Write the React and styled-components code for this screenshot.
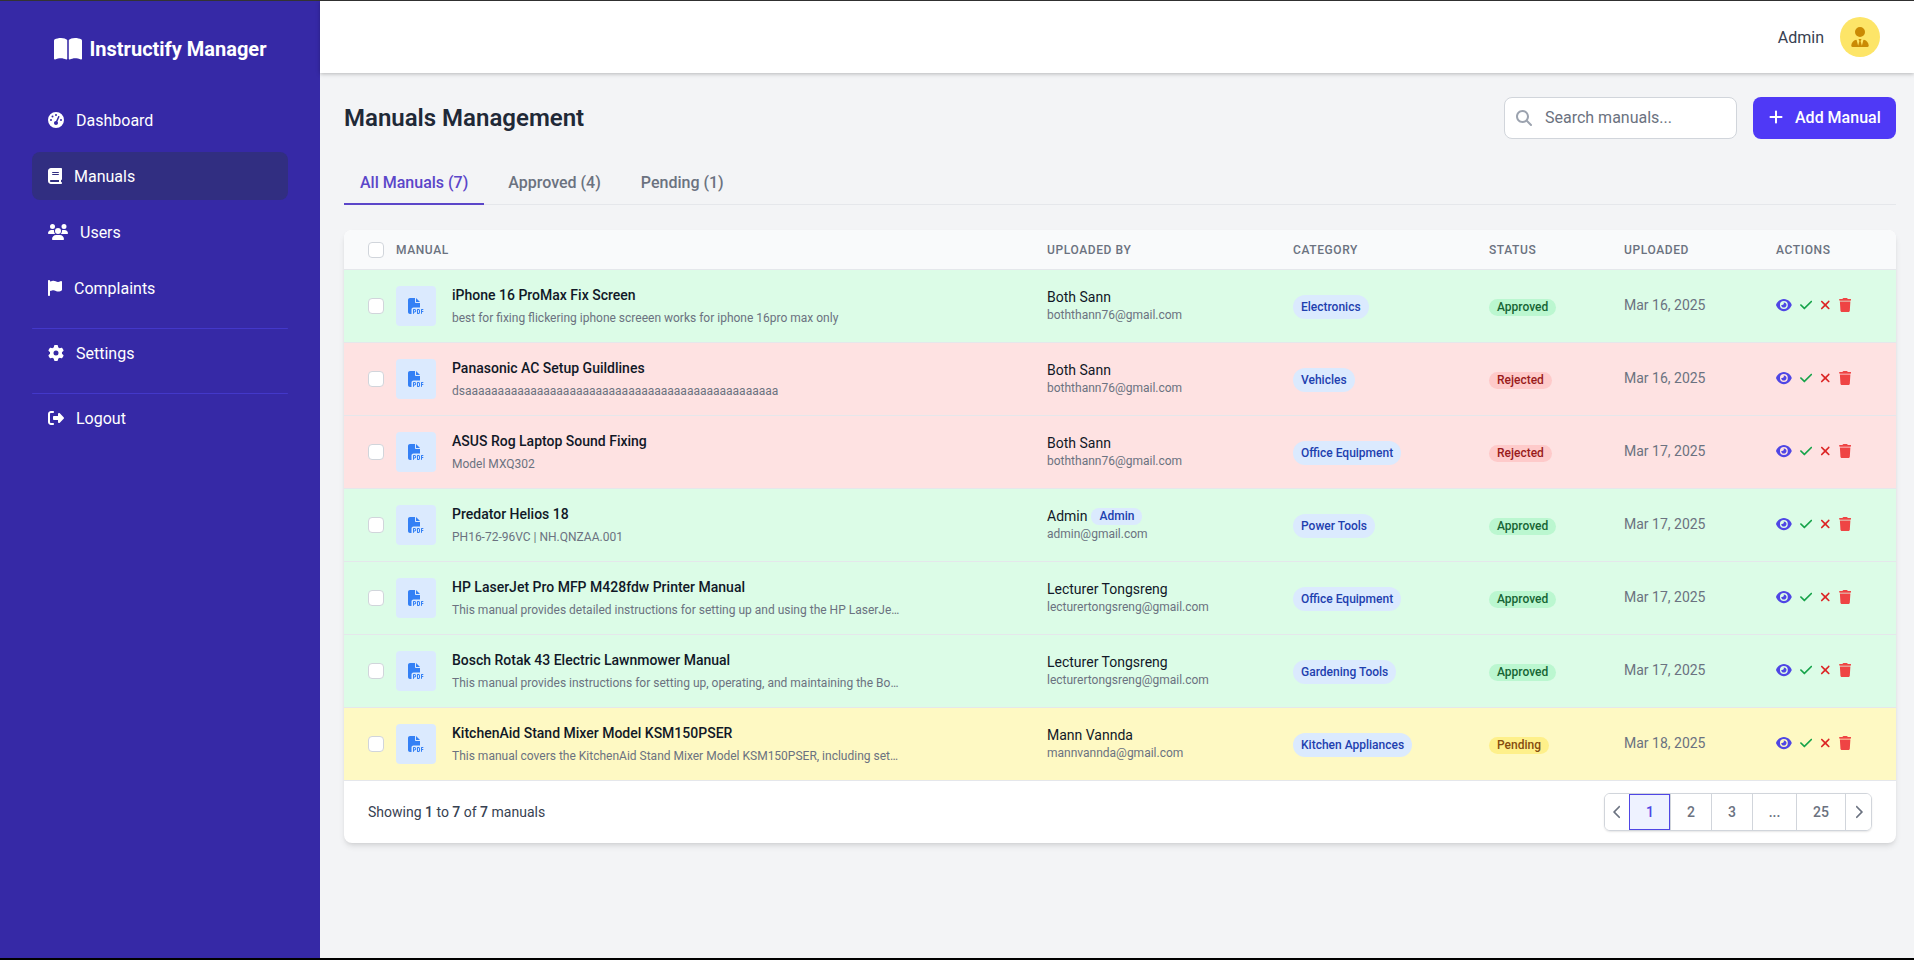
import React from "react";
import styled, { createGlobalStyle } from "styled-components";
import {
  FaBookOpen,
  FaGaugeHigh,
  FaBook,
  FaUsers,
  FaFlag,
  FaGear,
  FaRightFromBracket,
  FaUserTie,
  FaMagnifyingGlass,
  FaPlus,
  FaFilePdf,
  FaEye,
  FaCheck,
  FaXmark,
  FaTrash,
  FaChevronLeft,
  FaChevronRight,
} from "react-icons/fa6";

const manuals = [
  {
    title: "iPhone 16 ProMax Fix Screen",
    desc: "best for fixing flickering iphone screeen works for iphone 16pro max only",
    name: "Both Sann",
    email: "boththann76@gmail.com",
    category: "Electronics",
    status: "Approved",
    date: "Mar 16, 2025",
  },
  {
    title: "Panasonic AC Setup Guildlines",
    desc: "dsaaaaaaaaaaaaaaaaaaaaaaaaaaaaaaaaaaaaaaaaaaaaaaaa",
    name: "Both Sann",
    email: "boththann76@gmail.com",
    category: "Vehicles",
    status: "Rejected",
    date: "Mar 16, 2025",
  },
  {
    title: "ASUS Rog Laptop Sound Fixing",
    desc: "Model MXQ302",
    name: "Both Sann",
    email: "boththann76@gmail.com",
    category: "Office Equipment",
    status: "Rejected",
    date: "Mar 17, 2025",
  },
  {
    title: "Predator Helios 18",
    desc: "PH16-72-96VC | NH.QNZAA.001",
    name: "Admin",
    admin: true,
    email: "admin@gmail.com",
    category: "Power Tools",
    status: "Approved",
    date: "Mar 17, 2025",
  },
  {
    title: "HP LaserJet Pro MFP M428fdw Printer Manual",
    desc: "This manual provides detailed instructions for setting up and using the HP LaserJe…",
    name: "Lecturer Tongsreng",
    email: "lecturertongsreng@gmail.com",
    category: "Office Equipment",
    status: "Approved",
    date: "Mar 17, 2025",
  },
  {
    title: "Bosch Rotak 43 Electric Lawnmower Manual",
    desc: "This manual provides instructions for setting up, operating, and maintaining the Bo…",
    name: "Lecturer Tongsreng",
    email: "lecturertongsreng@gmail.com",
    category: "Gardening Tools",
    status: "Approved",
    date: "Mar 17, 2025",
  },
  {
    title: "KitchenAid Stand Mixer Model KSM150PSER",
    desc: "This manual covers the KitchenAid Stand Mixer Model KSM150PSER, including set…",
    name: "Mann Vannda",
    email: "mannvannda@gmail.com",
    category: "Kitchen Appliances",
    status: "Pending",
    date: "Mar 18, 2025",
  },
];

const rowColors = { Approved: "#dcfce7", Rejected: "#fee2e2", Pending: "#fef9c3" };
const statusColors = {
  Approved: { bg: "#bbf7d0", fg: "#166534" },
  Rejected: { bg: "#fecaca", fg: "#991b1b" },
  Pending: { bg: "#fef08a", fg: "#854d0e" },
};
const columns = "minmax(0, 1fr) 246px 196px 135px 152px 120px";

const GlobalStyle = createGlobalStyle`
  * { box-sizing: border-box; }
  html, body { margin: 0; height: 100%; }
  body {
    font-family: Roboto, "Liberation Sans", sans-serif;
    background: #000;
    overflow: hidden;
  }
`;

const TopLine = styled.div`
  height: 1px;
  background: #333;
`;

const Shell = styled.div`
  display: flex;
  height: 957px;
  background: #f3f4f6;
`;

const Sidebar = styled.aside`
  width: 320px;
  flex: none;
  background: #3629a6;
  padding: 0 32px;
  color: #fff;
`;

const Brand = styled.div`
  height: 95px;
  display: flex;
  align-items: center;
  justify-content: center;
  gap: 8px;
  font-size: 20px;
  font-weight: 700;
`;

const NavList = styled.nav`
  display: flex;
  flex-direction: column;
`;

const NavItem = styled.div`
  height: 48px;
  margin-bottom: 8px;
  border-radius: 8px;
  display: flex;
  align-items: center;
  gap: 12px;
  padding: 0 16px;
  font-size: 16px;
  color: #fff;
  background: ${(p) => (p.$active ? "#312e81" : "transparent")};
  svg {
    flex: none;
    height: 16px;
    width: ${(p) => p.$iconW || 16}px;
  }
`;

const NavDivider = styled.div`
  height: 1px;
  background: #4338ca;
  margin-top: 8px;
  border-radius: 8px;
`;

const Main = styled.main`
  flex: 1;
  min-width: 0;
  display: flex;
  flex-direction: column;
`;

const Header = styled.header`
  height: 72px;
  flex: none;
  background: #fff;
  box-shadow: 0 1px 4px rgba(0, 0, 0, 0.25);
  display: flex;
  align-items: center;
  justify-content: flex-end;
  padding: 0 34px 0 0;
  gap: 16px;
`;

const AdminName = styled.span`
  font-size: 16px;
  color: #374151;
`;

const Avatar = styled.div`
  width: 40px;
  height: 40px;
  border-radius: 50%;
  background: #fde568;
  color: #ca8a04;
  display: flex;
  align-items: center;
  justify-content: center;
  svg {
    height: 20px;
    width: 18px;
  }
`;

const Content = styled.div`
  padding: 24px 18px 0 24px;
`;

const TitleRow = styled.div`
  display: flex;
  align-items: center;
  justify-content: space-between;
  height: 42px;
  margin-bottom: 24px;
`;

const Title = styled.h1`
  margin: 0;
  font-size: 24px;
  font-weight: 600;
  color: #1f2937;
`;

const Tools = styled.div`
  display: flex;
  gap: 16px;
`;

const SearchBox = styled.div`
  width: 233px;
  height: 42px;
  background: #fff;
  border: 1px solid #d1d5db;
  border-radius: 8px;
  display: flex;
  align-items: center;
  padding: 0 11px 1px;
  gap: 13px;
  color: #9ca3af;
  font-size: 16px;
  span {
    color: #6b7280;
  }
`;

const AddButton = styled.div`
  width: 143px;
  height: 42px;
  border-radius: 8px;
  background: #4f39f6;
  color: #fff;
  display: flex;
  align-items: center;
  padding: 0 0 2px 16px;
  gap: 12px;
  font-size: 16px;
  font-weight: 500;
  white-space: nowrap;
  svg {
    flex: none;
    height: 16px;
    width: 14px;
  }
`;

const Tabs = styled.div`
  display: flex;
  gap: 8px;
  height: 42px;
  border-bottom: 1px solid #e5e7eb;
  margin-bottom: 25px;
`;

const Tab = styled.div`
  height: 42px;
  padding: 0 16px 2px;
  font-size: 16px;
  font-weight: 500;
  color: ${(p) => (p.$active ? "#5b46c9" : "#6b7280")};
  border-bottom: 2px solid ${(p) => (p.$active ? "#5b46c9" : "transparent")};
  display: flex;
  align-items: center;
`;

const Card = styled.section`
  background: #fff;
  border-radius: 8px;
  box-shadow: 0 4px 6px -1px rgba(0, 0, 0, 0.1), 0 2px 4px -2px rgba(0, 0, 0, 0.1);
  overflow: hidden;
`;

const Row = styled.div`
  display: grid;
  grid-template-columns: ${columns};
  align-items: center;
  height: 73px;
  background: ${(p) => rowColors[p.$status]};
  border-bottom: 1px solid #e5e7eb;
`;

const HeadRow = styled(Row)`
  height: 40px;
  background: #f9fafb;
  font-size: 12px;
  font-weight: 500;
  color: #6b7280;
  letter-spacing: 0.6px;
  text-transform: uppercase;
`;

const ManualCell = styled.div`
  display: flex;
  align-items: center;
  padding-left: 24px;
  min-width: 0;
`;

const Check = styled.span`
  width: 16px;
  height: 16px;
  flex: none;
  background: #fff;
  border: 1px solid #d1d5db;
  border-radius: 4px;
  margin-right: 12px;
`;

const PdfTile = styled.div`
  width: 40px;
  height: 40px;
  flex: none;
  border-radius: 4px;
  background: #dbeafe;
  color: #3480f5;
  display: flex;
  align-items: center;
  justify-content: center;
  margin-right: 16px;
  font-size: 16px;
`;

const ManualText = styled.div`
  min-width: 0;
  padding-bottom: 1px;
`;

const ManualTitle = styled.div`
  font-size: 14px;
  font-weight: 500;
  line-height: 20px;
  color: #111827;
`;

const ManualDesc = styled.div`
  font-size: 12px;
  line-height: 16px;
  margin-top: 5px;
  color: #6b7280;
  white-space: nowrap;
`;

const UserCell = styled.div`
  padding-bottom: 2px;
`;

const UserName = styled.div`
  font-size: 14px;
  line-height: 20px;
  color: #111827;
  display: flex;
  align-items: center;
  gap: 4px;
`;

const UserEmail = styled.div`
  font-size: 12px;
  line-height: 16px;
  color: #6b7280;
`;

const AdminTag = styled.span`
  font-size: 12px;
  font-weight: 500;
  line-height: 17px;
  padding: 0 8px;
  border-radius: 8px;
  background: #dbeafe;
  color: #1e40af;
`;

const PillCell = styled.div`
  display: flex;
  align-items: center;
  padding-top: 2px;
`;

const CategoryPill = styled.span`
  font-size: 12px;
  font-weight: 500;
  line-height: 16px;
  padding: 4px 8px;
  border-radius: 12px;
  background: #dbeafe;
  color: #1e40af;
`;

const StatusPill = styled.span`
  font-size: 12px;
  font-weight: 500;
  line-height: 17px;
  padding: 0 8px;
  border-radius: 9999px;
  background: ${(p) => statusColors[p.$status].bg};
  color: ${(p) => statusColors[p.$status].fg};
`;

const DateCell = styled.div`
  font-size: 14px;
  color: #6b7280;
  padding-bottom: 2px;
`;

const Actions = styled.div`
  display: flex;
  align-items: center;
  gap: 8px;
  padding-bottom: 2px;
`;

const ActionIcon = styled.span`
  display: flex;
  color: ${(p) => p.$color};
  svg {
    height: 14px;
    width: ${(p) => p.$w}px;
  }
`;

const Footer = styled.div`
  height: 62px;
  display: flex;
  align-items: center;
  justify-content: space-between;
  padding: 0 24px;
  font-size: 14px;
  color: #374151;
  b {
    font-weight: 500;
  }
`;

const Pager = styled.div`
  display: flex;
  height: 38px;
  border: 1px solid #d1d5db;
  border-radius: 6px;
  box-shadow: 0 1px 2px rgba(0, 0, 0, 0.1);
  overflow: hidden;
`;

const PageCell = styled.div`
  width: ${(p) => p.$w}px;
  display: flex;
  align-items: center;
  justify-content: center;
  font-size: 14px;
  font-weight: 500;
  color: ${(p) => (p.$active ? "#4f46e5" : "#6b7280")};
  background: ${(p) => (p.$active ? "#eef2ff" : "#fff")};
  border-left: 1px solid ${(p) => (p.$active ? "#4f46e5" : "#d1d5db")};
  outline: ${(p) => (p.$active ? "1px solid #4f46e5" : "none")};
  outline-offset: -1px;
  &:first-child {
    border-left: 0;
  }
  svg {
    height: 14px;
    width: 9px;
  }
`;

const navTop = [
  { icon: <FaGaugeHigh />, label: "Dashboard", w: 16 },
  { icon: <FaBook />, label: "Manuals", w: 14, active: true },
  { icon: <FaUsers />, label: "Users", w: 20 },
  { icon: <FaFlag />, label: "Complaints", w: 14 },
];

const App = () => (
  <>
    <GlobalStyle />
    <TopLine />
    <Shell>
      <Sidebar>
        <Brand>
          <FaBookOpen size={28} />
          Instructify Manager
        </Brand>
        <NavList>
          {navTop.map((n) => (
            <NavItem key={n.label} $active={n.active} $iconW={n.w}>
              {n.icon}
              {n.label}
            </NavItem>
          ))}
          <NavDivider />
          <NavItem>
            <FaGear />
            Settings
          </NavItem>
          <NavDivider />
          <NavItem>
            <FaRightFromBracket />
            Logout
          </NavItem>
        </NavList>
      </Sidebar>
      <Main>
        <Header>
          <AdminName>Admin</AdminName>
          <Avatar>
            <FaUserTie />
          </Avatar>
        </Header>
        <Content>
          <TitleRow>
            <Title>Manuals Management</Title>
            <Tools>
              <SearchBox>
                <FaMagnifyingGlass />
                <span>Search manuals...</span>
              </SearchBox>
              <AddButton>
                <FaPlus />
                Add Manual
              </AddButton>
            </Tools>
          </TitleRow>
          <Tabs>
            <Tab $active>All Manuals (7)</Tab>
            <Tab>Approved (4)</Tab>
            <Tab>Pending (1)</Tab>
          </Tabs>
          <Card>
            <HeadRow>
              <ManualCell>
                <Check />
                Manual
              </ManualCell>
              <div>Uploaded By</div>
              <div>Category</div>
              <div>Status</div>
              <div>Uploaded</div>
              <div>Actions</div>
            </HeadRow>
            {manuals.map((m) => (
              <Row key={m.title} $status={m.status}>
                <ManualCell>
                  <Check />
                  <PdfTile>
                    <FaFilePdf />
                  </PdfTile>
                  <ManualText>
                    <ManualTitle>{m.title}</ManualTitle>
                    <ManualDesc>{m.desc}</ManualDesc>
                  </ManualText>
                </ManualCell>
                <UserCell>
                  <UserName>
                    {m.name}
                    {m.admin && <AdminTag>Admin</AdminTag>}
                  </UserName>
                  <UserEmail>{m.email}</UserEmail>
                </UserCell>
                <PillCell>
                  <CategoryPill>{m.category}</CategoryPill>
                </PillCell>
                <PillCell>
                  <StatusPill $status={m.status}>{m.status}</StatusPill>
                </PillCell>
                <DateCell>{m.date}</DateCell>
                <Actions>
                  <ActionIcon $color="#4f46e5" $w={15.75}><FaEye /></ActionIcon>
                  <ActionIcon $color="#16a34a" $w={12.25}><FaCheck /></ActionIcon>
                  <ActionIcon $color="#dc2626" $w={10.5}><FaXmark /></ActionIcon>
                  <ActionIcon $color="#ef4444" $w={12.25}><FaTrash /></ActionIcon>
                </Actions>
              </Row>
            ))}
            <Footer>
              <div>
                Showing <b>1</b> to <b>7</b> of <b>7</b> manuals
              </div>
              <Pager>
                <PageCell $w={24}><FaChevronLeft /></PageCell>
                <PageCell $w={41} $active>1</PageCell>
                <PageCell $w={41}>2</PageCell>
                <PageCell $w={41}>3</PageCell>
                <PageCell $w={44}>...</PageCell>
                <PageCell $w={49}>25</PageCell>
                <PageCell $w={26}><FaChevronRight /></PageCell>
              </Pager>
            </Footer>
          </Card>
        </Content>
      </Main>
    </Shell>
  </>
);

export default App;
